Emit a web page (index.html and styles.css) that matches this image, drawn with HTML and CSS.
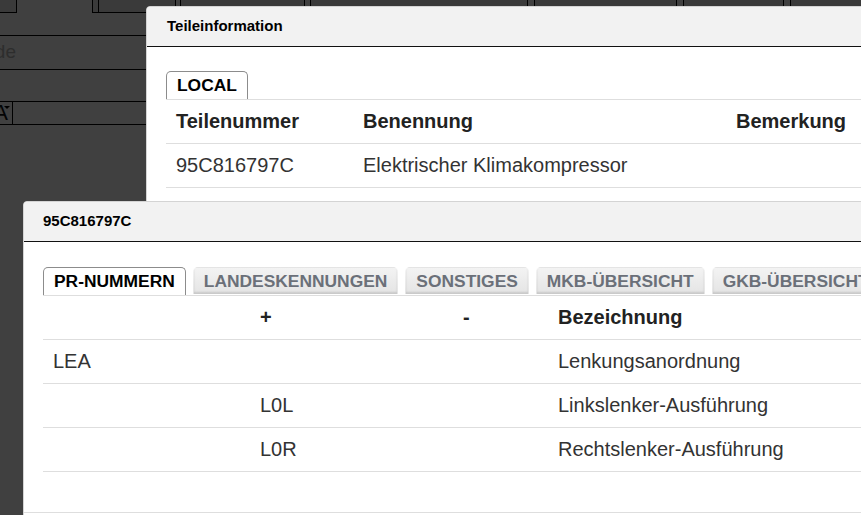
FILE: index.html
```html
<!DOCTYPE html>
<html lang="de">
<head>
<meta charset="utf-8">
<title>Teileinformation</title>
<link rel="stylesheet" href="styles.css">
</head>
<body>
  <div class="page">
    <div class="toolbar">
      <span class="tb-btn tb-1"></span>
      <span class="tb-btn tb-2"></span>
      <span class="tb-btn tb-3"></span>
      <span class="tb-btn tb-4"></span>
      <span class="tb-btn tb-5"></span>
      <span class="tb-btn tb-6"></span>
      <span class="tb-btn tb-7"></span>
    </div>
    <div class="form">
      <div class="form-row row-a"></div>
      <div class="form-row row-b"><span class="field-clip"><span class="field-text">Werkscode</span></span></div>
      <div class="form-row row-c"></div>
      <div class="form-row row-d"><span class="select-box"><span class="select-text">MA</span><span class="caret"></span></span></div>
    </div>
  </div>

  <div class="backdrop"></div>

  <section class="dialog dialog-parts">
    <header class="dialog-header">Teileinformation</header>
    <div class="dialog-body">
      <nav class="tabs">
        <span class="tab active">LOCAL</span>
      </nav>
      <div class="grid grid-parts">
        <div class="row head">
          <span>Teilenummer</span>
          <span>Benennung</span>
          <span class="remark">Bemerkung</span>
        </div>
        <div class="row">
          <span>95C816797C</span>
          <span>Elektrischer Klimakompressor</span>
          <span class="remark"></span>
        </div>
      </div>
    </div>
  </section>

  <section class="dialog dialog-pr">
    <header class="dialog-header">95C816797C</header>
    <div class="dialog-body">
      <nav class="tabs">
        <span class="tab active">PR-NUMMERN</span>
        <span class="tab">LANDESKENNUNGEN</span>
        <span class="tab">SONSTIGES</span>
        <span class="tab">MKB-ÜBERSICHT</span>
        <span class="tab">GKB-ÜBERSICHT</span>
      </nav>
      <div class="grid grid-pr">
        <div class="row head">
          <span></span>
          <span>+</span>
          <span>-</span>
          <span>Bezeichnung</span>
        </div>
        <div class="row">
          <span>LEA</span>
          <span></span>
          <span></span>
          <span>Lenkungsanordnung</span>
        </div>
        <div class="row">
          <span></span>
          <span>L0L</span>
          <span></span>
          <span>Linkslenker-Ausführung</span>
        </div>
        <div class="row">
          <span></span>
          <span>L0R</span>
          <span></span>
          <span>Rechtslenker-Ausführung</span>
        </div>
      </div>
    </div>
    <footer class="dialog-footer"></footer>
  </section>
</body>
</html>
```

FILE: styles.css
```css
html, body {
  margin: 0;
  padding: 0;
}

body {
  width: 861px;
  height: 515px;
  overflow: hidden;
  background: #fff;
  font-family: "Liberation Sans", Arial, sans-serif;
  position: relative;
}

/* ---------- page underneath the modal ---------- */

.toolbar {
  display: flex;
  height: 13px;
}

.tb-btn {
  display: block;
  height: 13px;
  box-sizing: border-box;
  background: #e6e6e6;
  border: 1px solid #000;
  border-top: none;
  flex: none;
}

.tb-1 { width: 17px; border-left: none; }
.tb-2 { width: 84px; margin-left: 75px; position: relative; }
.tb-2::before {
  content: "";
  position: absolute;
  left: 5px;
  top: 0;
  bottom: 0;
  border-left: 1px solid #000;
}
.tb-3 { width: 125px; margin-left: 4px; }
.tb-4 { width: 218px; margin-left: 5px; }
.tb-5 { width: 143px; margin-left: 6px; }
.tb-6 { width: 101px; margin-left: 6px; }
.tb-7 { width: 100px; margin-left: 6px; }

.form-row {
  box-sizing: border-box;
  border-bottom: 1px solid #000;
  display: flex;
  align-items: center;
}

.row-a { height: 23px; }
.row-b { height: 34px; }
.row-c { height: 32px; }
.row-d { height: 23px; }

.field-clip {
  width: 16px;
  overflow: hidden;
  display: flex;
  justify-content: flex-end;
  padding-bottom: 2px;
}

.field-text {
  font-size: 19px;
  color: #b4b4b4;
  white-space: nowrap;
}

.select-box {
  width: 13px;
  height: 22px;
  box-sizing: border-box;
  border-right: 1px solid #000;
  overflow: hidden;
  display: flex;
  justify-content: flex-end;
  align-items: flex-end;
  position: relative;
}

.select-text {
  font-size: 22px;
  line-height: 22px;
  color: #111;
  margin-right: 4px;
}

.caret {
  position: absolute;
  right: 2px;
  top: 4px;
  width: 0;
  height: 0;
  border-left: 3px solid transparent;
  border-right: 3px solid transparent;
  border-top: 3px solid #000;
}

.backdrop {
  position: absolute;
  inset: 0;
  background: rgba(0, 0, 0, 0.75);
}

/* ---------- dialogs ---------- */

.dialog {
  position: absolute;
  background: #fff;
  border: 1px solid #d4d4d4;
  border-radius: 4px;
  overflow: hidden;
  color: #333;
}

.dialog-parts {
  left: 146px;
  top: 6px;
  width: 780px;
  height: 320px;
}

.dialog-pr {
  left: 23px;
  top: 201px;
  width: 900px;
  height: 360px;
}

.dialog-header {
  height: 39px;
  line-height: 38px;
  background: #f2f2f2;
  border-bottom: 1px solid #111;
  padding-left: 20px;
  font-size: 15px;
  font-weight: bold;
  color: #000;
}

.dialog-pr .dialog-header {
  padding-left: 19px;
}

.dialog-body {
  padding: 24px 0 0 19px;
  box-sizing: border-box;
}

.dialog-pr .dialog-body {
  height: 270px;
  padding-top: 25px;
}

.dialog-footer {
  border-top: 1px solid #dedede;
  height: 40px;
  background: #fff;
}

/* ---------- tabs ---------- */

.tabs {
  display: flex;
  align-items: flex-start;
  gap: 7px;
  height: 28px;
  white-space: nowrap;
}

.tab {
  display: block;
  flex: none;
  height: 27px;
  box-sizing: border-box;
  padding: 0 10px;
  border: 1px solid transparent;
  border-bottom: none;
  border-radius: 5px 5px 0 0;
  font-size: 17.4px;
  font-weight: bold;
  line-height: 26px;
  color: #6b7079;
  background: linear-gradient(#f3f3f3, #e4e4e4);
  box-shadow: inset 0 -2px 2px rgba(0, 0, 0, 0.12);
}

.tab.active {
  height: 28px;
  border-color: #8c8c8c;
  background: #fff;
  color: #000;
  box-shadow: none;
}

/* ---------- tables ---------- */

.grid {
  border-top: 1px solid #dedede;
}

.row {
  display: grid;
  height: 44px;
  box-sizing: border-box;
  border-bottom: 1px solid #dedede;
  align-items: center;
  font-size: 20px;
  color: #333;
  white-space: nowrap;
}

.row > span {
  padding-left: 10px;
}

.row.head {
  font-weight: bold;
  color: #222;
}

.grid-parts .row {
  grid-template-columns: 187px 373px 1fr;
}

.grid-pr .row {
  grid-template-columns: 207px 203px 95px 1fr;
}
```
